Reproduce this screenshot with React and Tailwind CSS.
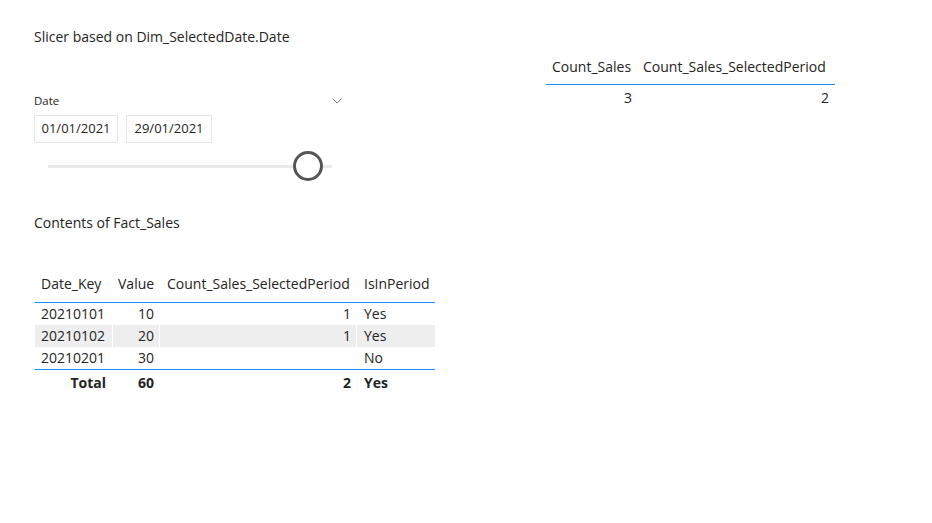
import React from "react";

export default function App() {
  const rows = [
    { k: "20210101", v: "10", c: "1", p: "Yes", bg: false },
    { k: "20210102", v: "20", c: "1", p: "Yes", bg: true },
    { k: "20210201", v: "30", c: "", p: "No", bg: false },
  ];
  const cols = "grid grid-cols-[77px_46px_196px_78px] gap-x-px";
  return (
    <div className="w-[932px] h-[523px] bg-white text-[#252423] font-['Open_Sans',sans-serif] overflow-hidden">
      <div className="flex">
        {/* Left column */}
        <div className="w-[546px] pl-[34px] pt-[27px] flex flex-col">
          <div className="h-5 leading-5 text-[14px]">Slicer based on Dim_SelectedDate.Date</div>

          {/* Slicer */}
          <div className="mt-[46px] w-[308px] flex items-center justify-between h-4">
            <span className="text-[11.5px] leading-4">Date</span>
            <svg width="10" height="6" viewBox="0 0 10 6">
              <polyline points="0.5,0.5 5,5 9.5,0.5" fill="none" stroke="#7a7a7a" strokeWidth="1" />
            </svg>
          </div>
          <div className="mt-[6px] flex gap-2">
            <div className="w-[84px] h-[28px] border border-[#e6e6e6] flex items-center justify-center text-[13px]">01/01/2021</div>
            <div className="w-[86px] h-[28px] border border-[#e6e6e6] flex items-center justify-center text-[13px]">29/01/2021</div>
          </div>
          <div className="mt-[8px] ml-[14px] w-[284px] h-[30px] relative flex items-center">
            <div className="w-full h-[3px] bg-[#e8e8e8] mt-[1px]" />
            <div className="absolute left-[245px] top-0 w-[30px] h-[30px] rounded-full border-[3px] border-[#555555] bg-white" />
          </div>

          <div className="mt-[32px] h-5 leading-5 text-[14px]">Contents of Fact_Sales</div>

          {/* Fact table */}
          <div className="mt-[41px] ml-px w-[400px] text-[14px]">
            <div className={`${cols} pb-[8px] border-b border-[#118dff] leading-5`}>
              <div className="pl-[6px]">Date_Key</div>
              <div className="pl-[5px]">Value</div>
              <div className="pl-[7px]">Count_Sales_SelectedPeriod</div>
              <div className="pl-[7px]">IsInPeriod</div>
            </div>
            {rows.map((r) => (
              <div key={r.k} className={`${cols} h-[22px] leading-[22px]`}>
                <div className={`pl-[6px] ${r.bg ? "bg-[#eeeeee]" : ""}`}>{r.k}</div>
                <div className={`pr-[5px] text-right ${r.bg ? "bg-[#eeeeee]" : ""}`}>{r.v}</div>
                <div className={`pr-[5px] text-right ${r.bg ? "bg-[#eeeeee]" : ""}`}>{r.c}</div>
                <div className={`pl-[7px] ${r.bg ? "bg-[#eeeeee]" : ""}`}>{r.p}</div>
              </div>
            ))}
            <div className={`${cols} h-[26px] leading-[26px] border-t border-[#118dff] font-bold`}>
              <div className="pr-[6px] text-right">Total</div>
              <div className="pr-[5px] text-right">60</div>
              <div className="pr-[5px] text-right">2</div>
              <div className="pl-[7px]">Yes</div>
            </div>
          </div>
        </div>

        {/* Right card table */}
        <div className="pt-[57px] w-[289px] text-[14px]">
          <div className="grid grid-cols-[92px_197px] pb-[7px] border-b border-[#118dff] leading-5">
            <div className="pl-[6px]">Count_Sales</div>
            <div className="pl-[5px]">Count_Sales_SelectedPeriod</div>
          </div>
          <div className="grid grid-cols-[92px_197px] h-[26px] leading-[26px]">
            <div className="pr-[6px] text-right">3</div>
            <div className="pr-[6px] text-right">2</div>
          </div>
        </div>
      </div>
    </div>
  );
}
